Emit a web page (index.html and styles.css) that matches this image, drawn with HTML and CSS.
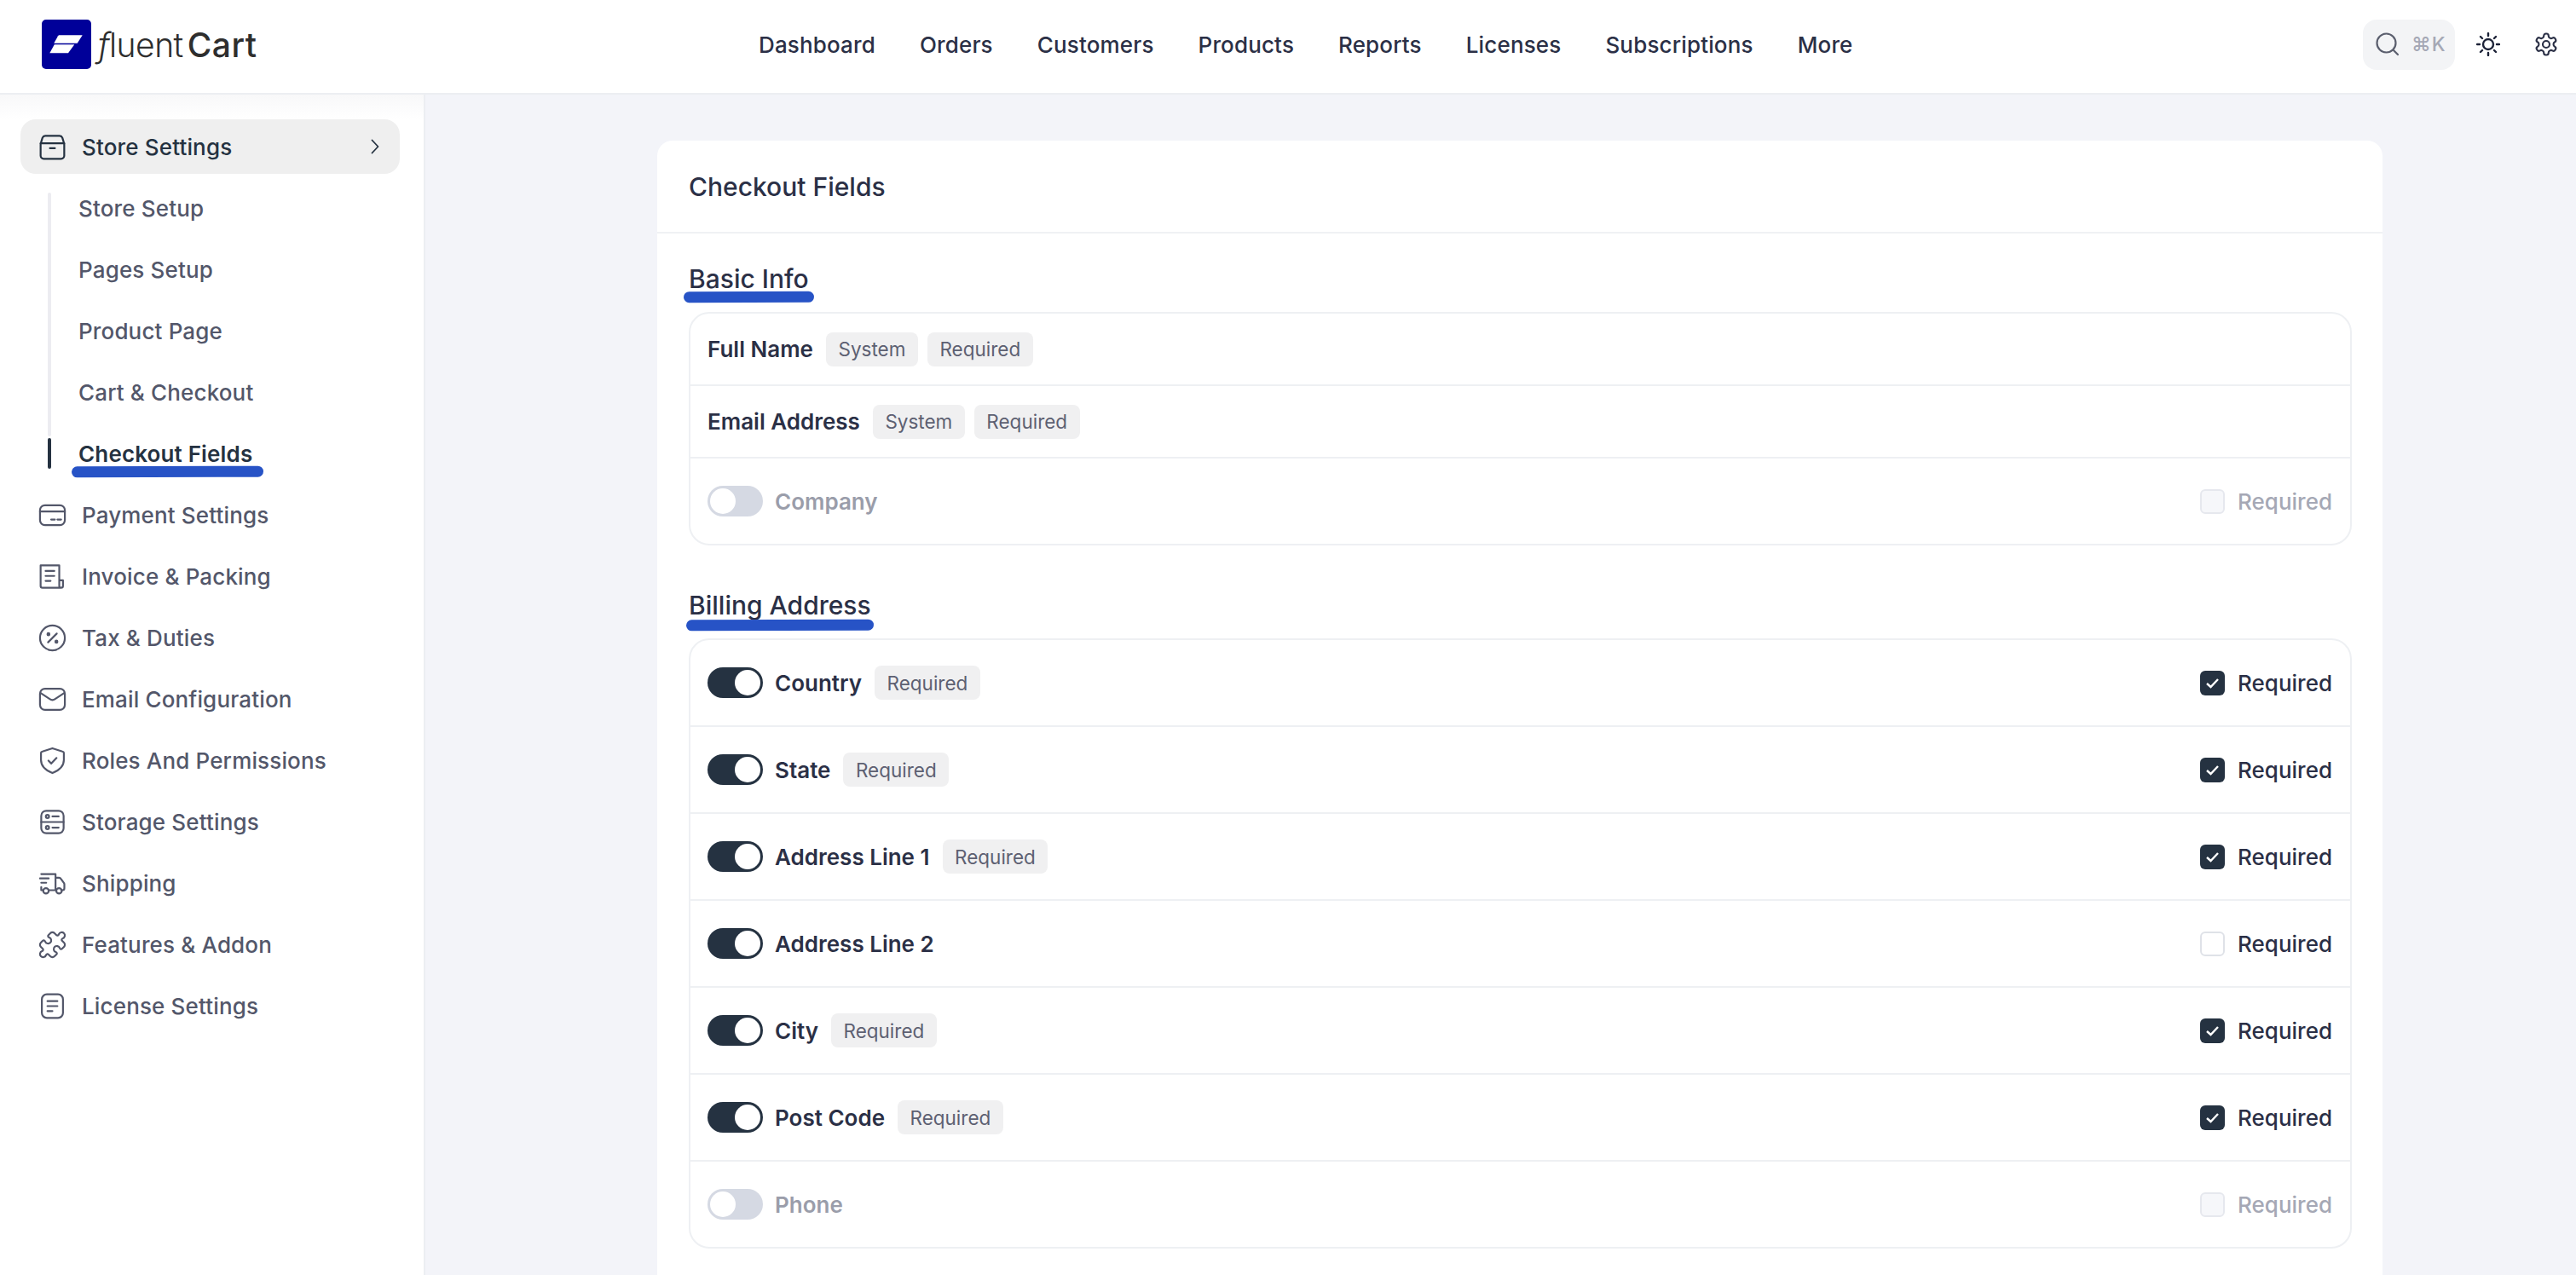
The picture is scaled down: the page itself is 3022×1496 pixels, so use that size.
FILE: index.html
```html
<!DOCTYPE html>
<html lang="en">
<head>
    <meta charset="UTF-8">
    <meta name="viewport" content="width=device-width, initial-scale=1.0">
    <title>FluentCart - Checkout Fields</title>
    <link rel="stylesheet" href="styles.css">
</head>
<body>
    <header class="topbar">
        <a class="logo" href="#">
            <svg class="logo-mark" viewBox="0 0 58 58">
                <rect width="58" height="58" rx="5" fill="#000099"/>
                <path d="M20 18.3H47.7L41.7 27.7H14.3L19 19.3Z" fill="#fff"/>
                <path d="M14.8 29.3H38.3L31 39.3H9.3Z" fill="#fff"/>
            </svg>
            <span class="logo-text"><span class="logo-light"><i>f</i>luent</span><span class="logo-bold">Cart</span></span>
        </a>
        <nav class="main-nav">
            <a href="#">Dashboard</a>
            <a href="#">Orders</a>
            <a href="#">Customers</a>
            <a href="#">Products</a>
            <a href="#">Reports</a>
            <a href="#">Licenses</a>
            <a href="#">Subscriptions</a>
            <a href="#">More</a>
        </nav>
        <div class="top-actions">
            <div class="search-box">
                <svg class="search-icon" viewBox="0 0 28 28" fill="none" stroke="#5b5f6e" stroke-width="2.2" stroke-linecap="round"><circle cx="12.5" cy="12.5" r="11"/><path d="M21 21l5 5"/></svg>
                <span class="search-key">⌘K</span>
            </div>
            <svg class="action-icon sun" viewBox="0 0 28 28" fill="none" stroke="#1c2237" stroke-width="2.4" stroke-linecap="round"><circle cx="14" cy="14" r="6"/><path d="M14 1v3M14 24v3M1 14h3M24 14h3M5 5l2 2M21 21l2 2M5 23l2-2M21 7l2-2"/></svg>
            <svg class="action-icon gear" viewBox="0 0 24 24" fill="none" stroke="#2b3046" stroke-width="1.7" stroke-linejoin="round"><path d="M12.22 2h-.44a2 2 0 0 0-2 2v.18a2 2 0 0 1-1 1.73l-.43.25a2 2 0 0 1-2 0l-.15-.08a2 2 0 0 0-2.73.73l-.22.38a2 2 0 0 0 .73 2.73l.15.1a2 2 0 0 1 1 1.72v.51a2 2 0 0 1-1 1.74l-.15.09a2 2 0 0 0-.73 2.73l.22.38a2 2 0 0 0 2.73.73l.15-.08a2 2 0 0 1 2 0l.43.25a2 2 0 0 1 1 1.73V20a2 2 0 0 0 2 2h.44a2 2 0 0 0 2-2v-.18a2 2 0 0 1 1-1.73l.43-.25a2 2 0 0 1 2 0l.15.08a2 2 0 0 0 2.73-.73l.22-.39a2 2 0 0 0-.73-2.73l-.15-.08a2 2 0 0 1-1-1.74v-.5a2 2 0 0 1 1-1.74l.15-.09a2 2 0 0 0 .73-2.73l-.22-.38a2 2 0 0 0-2.73-.73l-.15.08a2 2 0 0 1-2 0l-.43-.25a2 2 0 0 1-1-1.73V4a2 2 0 0 0-2-2z"/><circle cx="12" cy="12" r="3.2"/></svg>
        </div>
    </header>

    <div class="layout">
        <aside class="sidebar">
            <a class="side-item active" href="#">
                <svg class="side-icon" viewBox="0 0 24 24"><path d="M2.500 9.500V19a2.500 2.500 0 0 0 2.500 2.500h14a2.500 2.500 0 0 0 2.500-2.500V9.500L20 4.500a2.500 2.500 0 0 0-2.200-1.500H6.200A2.500 2.500 0 0 0 4 4.500Z"/><path d="M2.500 9H21.500M10 13h4"/></svg>
                <span>Store Settings</span>
                <svg class="chevron" viewBox="0 0 10 18" fill="none" stroke="#253241" stroke-width="1.8" stroke-linecap="round" stroke-linejoin="round"><path d="M1.500 1.500L8.500 9L1.500 16.500"/></svg>
            </a>
            <div class="sub-menu">
                <a class="sub-item" href="#">Store Setup</a>
                <a class="sub-item" href="#">Pages Setup</a>
                <a class="sub-item" href="#">Product Page</a>
                <a class="sub-item" href="#">Cart &amp; Checkout</a>
                <a class="sub-item current" href="#"><span class="marked mark-side">Checkout Fields</span></a>
            </div>
            <a class="side-item" href="#">
                <svg class="side-icon" viewBox="0 0 24 24"><rect x="2" y="4" width="20" height="16" rx="4"/><path d="M2 9h20M11 15.500h3M16 15.500h3"/></svg>
                <span>Payment Settings</span>
            </a>
            <a class="side-item" href="#">
                <svg class="side-icon" viewBox="0 0 24 24"><path d="M18.500 21H4a1.500 1.500 0 0 1-1.500-1.500V3h15v16.500a1.500 1.500 0 0 0 3 0V15h-3"/><path d="M6.500 7.500h7M6.500 11.500h7M6.500 15.500h4"/></svg>
                <span>Invoice &amp; Packing</span>
            </a>
            <a class="side-item" href="#">
                <svg class="side-icon" viewBox="0 0 24 24"><circle cx="12" cy="12" r="10"/><path d="M8.500 15.500l7-7"/><circle cx="8.800" cy="9" r=".8"/><circle cx="15.200" cy="15" r=".8"/></svg>
                <span>Tax &amp; Duties</span>
            </a>
            <a class="side-item" href="#">
                <svg class="side-icon" viewBox="0 0 24 24"><rect x="2" y="3.500" width="20" height="17" rx="4"/><path d="M2.500 7l7.300 4.800a4 4 0 0 0 4.400 0L21.500 7"/></svg>
                <span>Email Configuration</span>
            </a>
            <a class="side-item" href="#">
                <svg class="side-icon" viewBox="0 0 24 24"><path d="M12 2l8 2.600a1.500 1.500 0 0 1 1.200 1.500v5.400c0 5-4 8.400-9.200 10.500C6.800 19.900 2.800 16.500 2.800 11.500V6.100a1.500 1.500 0 0 1 1.200-1.500Z"/><path d="M8.800 12l2.300 2.300 4.200-4.500"/></svg>
                <span>Roles And Permissions</span>
            </a>
            <a class="side-item" href="#">
                <svg class="side-icon" viewBox="0 0 24 24"><rect x="3" y="3" width="18" height="18" rx="4"/><path d="M3 12h18M12 7.500h5M12 16.500h5"/><circle cx="8" cy="7.500" r="1.300"/><circle cx="8" cy="16.500" r="1.300"/></svg>
                <span>Storage Settings</span>
            </a>
            <a class="side-item" href="#">
                <svg class="side-icon" viewBox="0 0 24 24"><path d="M3 4.500h11.500v13M2 8h7M3 11.500h4M3 15v2.500h1.500M9 17.500h6M14.500 7.500h2.800c.6 0 1.200.3 1.500.8l2.500 3.400c.2.300.3.600.3 1v3.300a1.500 1.500 0 0 1-1.500 1.500h-1"/><circle cx="6.800" cy="18" r="2.200"/><circle cx="17.300" cy="18" r="2.200"/></svg>
                <span>Shipping</span>
            </a>
            <a class="side-item" href="#">
                <svg class="side-icon" viewBox="0 0 24 24"><path d="M19.439 7.850c-.049.322.059.648.289.878l1.568 1.568c.47.47.706 1.087.706 1.704s-.235 1.233-.706 1.704l-1.611 1.611a.98.98 0 0 1-.837.276c-.47-.07-.802-.48-.968-.925a2.501 2.501 0 1 0-3.214 3.214c.446.166.855.497.925.968a.979.979 0 0 1-.276.837l-1.610 1.610a2.404 2.404 0 0 1-1.705.707 2.402 2.402 0 0 1-1.704-.706l-1.568-1.568a1.026 1.026 0 0 0-.877-.29c-.493.074-.84.504-1.020.968a2.500 2.500 0 1 1-3.237-3.237c.464-.18.894-.527.967-1.020a1.026 1.026 0 0 0-.289-.877l-1.568-1.568A2.402 2.402 0 0 1 1.998 12c0-.617.236-1.234.706-1.704L4.230 8.770c.24-.24.581-.353.917-.303.515.077.877.528 1.073 1.010a2.500 2.500 0 1 0 3.259-3.259c-.482-.196-.933-.558-1.010-1.073-.05-.336.062-.676.303-.917l1.525-1.525A2.402 2.402 0 0 1 12 1.998c.617 0 1.234.236 1.704.706l1.568 1.568c.23.23.556.338.877.29.493-.074.84-.504 1.020-.968a2.500 2.500 0 1 1 3.237 3.237c-.464.18-.894.527-.967 1.020Z"/></svg>
                <span>Features &amp; Addon</span>
            </a>
            <a class="side-item" href="#">
                <svg class="side-icon" viewBox="0 0 24 24"><rect x="3.500" y="2.500" width="17" height="19" rx="4"/><path d="M8 8h8M8 12h8M8 16h4"/></svg>
                <span>License Settings</span>
            </a>
        </aside>

        <main class="main">
            <section class="card">
                <div class="card-head">Checkout Fields</div>
                <div class="card-body">
                    <h2 class="group-title"><span class="marked mark-basic">Basic Info</span></h2>
                    <div class="group">
                        <div class="row static">
                            <div class="row-left"><span class="field-name">Full Name</span><span class="badge">System</span><span class="badge">Required</span></div>
                        </div>
                        <div class="row static">
                            <div class="row-left"><span class="field-name">Email Address</span><span class="badge">System</span><span class="badge">Required</span></div>
                        </div>
                        <div class="row off">
                            <div class="row-left"><span class="toggle"></span><span class="field-name">Company</span></div>
                            <label class="req"><span class="check"></span>Required</label>
                        </div>
                    </div>

                    <h2 class="group-title billing"><span class="marked mark-billing">Billing Address</span></h2>
                    <div class="group">
                        <div class="row">
                            <div class="row-left"><span class="toggle on"></span><span class="field-name">Country</span><span class="badge">Required</span></div>
                            <label class="req"><span class="check on"><svg viewBox="0 0 29 29"><path d="M8 15l4.500 4L21 10"/></svg></span>Required</label>
                        </div>
                        <div class="row">
                            <div class="row-left"><span class="toggle on"></span><span class="field-name">State</span><span class="badge">Required</span></div>
                            <label class="req"><span class="check on"><svg viewBox="0 0 29 29"><path d="M8 15l4.500 4L21 10"/></svg></span>Required</label>
                        </div>
                        <div class="row">
                            <div class="row-left"><span class="toggle on"></span><span class="field-name">Address Line 1</span><span class="badge">Required</span></div>
                            <label class="req"><span class="check on"><svg viewBox="0 0 29 29"><path d="M8 15l4.500 4L21 10"/></svg></span>Required</label>
                        </div>
                        <div class="row">
                            <div class="row-left"><span class="toggle on"></span><span class="field-name">Address Line 2</span></div>
                            <label class="req"><span class="check empty"></span>Required</label>
                        </div>
                        <div class="row">
                            <div class="row-left"><span class="toggle on"></span><span class="field-name">City</span><span class="badge">Required</span></div>
                            <label class="req"><span class="check on"><svg viewBox="0 0 29 29"><path d="M8 15l4.500 4L21 10"/></svg></span>Required</label>
                        </div>
                        <div class="row">
                            <div class="row-left"><span class="toggle on"></span><span class="field-name">Post Code</span><span class="badge">Required</span></div>
                            <label class="req"><span class="check on"><svg viewBox="0 0 29 29"><path d="M8 15l4.500 4L21 10"/></svg></span>Required</label>
                        </div>
                        <div class="row off">
                            <div class="row-left"><span class="toggle"></span><span class="field-name">Phone</span></div>
                            <label class="req"><span class="check"></span>Required</label>
                        </div>
                    </div>
                </div>
            </section>
        </main>
    </div>
</body>
</html>
```

FILE: styles.css
```css
* {
    box-sizing: border-box;
}

html, body {
    height: 100%;
}

body {
    margin: 0;
    overflow: hidden;
    font-family: 'Inter', 'Liberation Sans', sans-serif;
    background: #f3f4f9;
    color: #2b3046;
}

a {
    color: inherit;
    text-decoration: none;
}

/* top bar */
.topbar {
    display: grid;
    grid-template-columns: 890px auto 1fr;
    align-items: center;
    height: 111px;
    padding-bottom: 5px;
    background: #fff;
    border-bottom: 2px solid #eceef2;
}

.logo {
    display: flex;
    align-items: center;
    gap: 8px;
    padding-left: 49px;
}

.logo-mark {
    width: 58px;
    height: 58px;
}

.logo-text {
    font-size: 39px;
    line-height: 1;
    color: #2e2e2e;
}

.logo-light {
    font-weight: 300;
    letter-spacing: -0.5px;
    margin-right: 5px;
}

.logo-bold {
    font-weight: 500;
    letter-spacing: 0.5px;
}

.main-nav {
    display: flex;
    gap: 52px;
    font-size: 26px;
    font-weight: 500;
    letter-spacing: 0.15px;
    color: #2b3046;
}

.top-actions {
    display: flex;
    align-items: center;
    justify-content: flex-end;
    padding-right: 20px;
}

.search-box {
    display: flex;
    align-items: center;
    gap: 14px;
    width: 108px;
    height: 59px;
    padding-left: 15px;
    background: #f3f4f6;
    border-radius: 16px;
}

.search-icon {
    width: 28px;
    height: 28px;
}

.search-key {
    font-size: 23px;
    font-weight: 500;
    letter-spacing: 1px;
    color: #a5a8b5;
    white-space: nowrap;
}

.action-icon {
    width: 28px;
    height: 28px;
}

.sun {
    margin-left: 25px;
}

.gear {
    width: 30px;
    height: 30px;
    margin-left: 39px;
}

/* layout */
.layout {
    display: flex;
    height: calc(100% - 111px);
}

.sidebar {
    width: 499px;
    flex-shrink: 0;
    padding: 29px 28px 0 24px;
    background: linear-gradient(#f8f8f9, #fff 29px);
    border-right: 2px solid #eceef2;
}

.side-item {
    display: flex;
    align-items: center;
    gap: 17px;
    height: 64px;
    margin-bottom: 8px;
    padding: 0 24px 0 20px;
    border-radius: 18px;
    font-size: 26px;
    font-weight: 500;
    letter-spacing: 0.15px;
    color: #53576a;
}

.side-item.active {
    background: #efefef;
    color: #253241;
}

.side-item.active .side-icon {
    stroke: #253241;
}

.side-icon {
    width: 35px;
    height: 35px;
    flex-shrink: 0;
    fill: none;
    stroke: #53576a;
    stroke-width: 1.5;
    stroke-linecap: round;
    stroke-linejoin: round;
}

.chevron {
    width: 10px;
    height: 18px;
    margin-left: auto;
}

.sub-menu {
    position: relative;
    margin: -4px 0 4px 32px;
    padding-left: 36px;
}

.sub-menu::before {
    content: "";
    position: absolute;
    left: 0;
    top: 18px;
    bottom: 56px;
    width: 4px;
    border-radius: 2px;
    background: #ececf1;
}

.sub-item {
    display: flex;
    align-items: center;
    height: 72px;
    font-size: 26px;
    font-weight: 500;
    letter-spacing: 0.15px;
    color: #53576a;
}

.sub-item.current {
    position: relative;
    font-weight: 600;
    color: #253241;
}

.sub-item.current::before {
    content: "";
    position: absolute;
    left: -36px;
    top: 18px;
    width: 4px;
    height: 36px;
    border-radius: 2px;
    background: #253241;
}

/* hand drawn marker lines */
.marked {
    position: relative;
    display: inline-block;
}

.marked::after {
    content: "";
    position: absolute;
    height: 13px;
    border-radius: 7px;
    background: #2753c6;
    transform: rotate(-0.15deg);
}

.mark-side::after {
    left: -8px;
    right: -13px;
    top: 30px;
}

.mark-basic::after {
    left: -6px;
    right: -6px;
    top: 33px;
}

.mark-billing::after {
    left: -3px;
    right: -3px;
    top: 35px;
}

/* main */
.main {
    flex: 1;
    padding: 54px 227px 0 272px;
}

.card {
    background: #fff;
    border-radius: 18px;
    height: 1400px;
}

.card-head {
    display: flex;
    align-items: center;
    height: 109px;
    padding-left: 37px;
    font-size: 30px;
    font-weight: 500;
    color: #2b3046;
    border-bottom: 2px solid #f0f1f4;
}

.card-body {
    padding: 35px 36px 0 37px;
}

.group-title {
    margin: 0 0 21px;
    font-size: 30px;
    line-height: 36px;
    font-weight: 500;
    color: #2b3046;
}

.group-title.billing {
    margin-top: 52px;
    margin-bottom: 21px;
}

.group {
    border: 2px solid #eef0f3;
    border-radius: 24px;
}

.row {
    display: flex;
    align-items: center;
    justify-content: space-between;
    height: 102px;
    padding: 0 21px 0 20px;
    border-bottom: 2px solid #eef0f3;
}

.row:last-child {
    border-bottom: none;
    height: 100px;
}

.row.static {
    height: 85px;
}

.row-left {
    display: flex;
    align-items: center;
}

.field-name {
    font-size: 26px;
    font-weight: 600;
    color: #2b3046;
    margin-right: 15px;
}

.badge {
    display: flex;
    align-items: center;
    height: 40px;
    padding: 0 14.5px;
    margin-right: 11px;
    background: #f0f0f1;
    border-radius: 8px;
    font-size: 22.5px;
    color: #5d6072;
}

.toggle {
    position: relative;
    width: 65px;
    height: 36px;
    margin-right: 14px;
    border-radius: 18px;
    background: #d5d9e3;
}

.toggle::after {
    content: "";
    position: absolute;
    top: 3px;
    left: 3px;
    width: 30px;
    height: 30px;
    border-radius: 50%;
    background: #fff;
}

.toggle.on {
    background: #253241;
}

.toggle.on::after {
    left: 32px;
}

.req {
    display: flex;
    align-items: center;
    gap: 15px;
    font-size: 26px;
    font-weight: 500;
    color: #2b3046;
}

.check {
    display: block;
    width: 29px;
    height: 29px;
    border-radius: 6px;
    background: #f6f7fa;
    border: 2px solid #e6e8ee;
}

.check.empty {
    background: #fff;
    border-color: #dfe2e8;
}

.check.on {
    background: #253241;
    border: none;
}

.check svg {
    display: block;
    width: 29px;
    height: 29px;
    fill: none;
    stroke: #fff;
    stroke-width: 2.4;
}

.off .field-name {
    color: #9a9daa;
}

.off .req {
    color: #a5a8b5;
}
```
